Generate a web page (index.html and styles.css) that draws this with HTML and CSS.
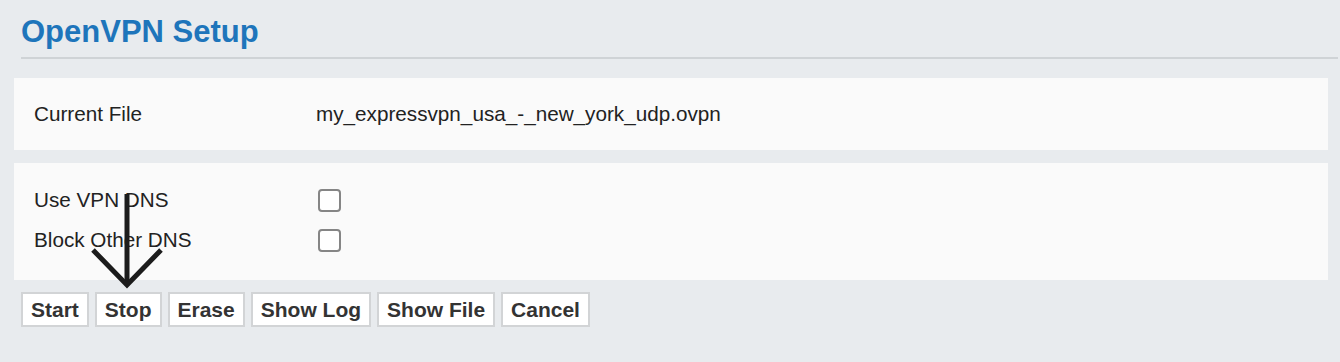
FILE: index.html
```html
<!DOCTYPE html>
<html lang="en">
<head>
    <meta charset="UTF-8">
    <meta name="viewport" content="width=device-width, initial-scale=1.0">
    <title>OpenVPN Setup</title>
    <link rel="stylesheet" href="styles.css">
</head>
<body>

<div class="page-head">
    <h1>OpenVPN Setup</h1>
</div>

<div class="content">
    <div class="panel">
        <div class="row">
            <span class="label">Current File</span>
            <span class="value">my_expressvpn_usa_-_new_york_udp.ovpn</span>
        </div>
    </div>

    <div class="panel panel-options">
        <div class="row">
            <label class="label" for="vpn-dns">Use VPN DNS</label>
            <input type="checkbox" id="vpn-dns">
        </div>
        <div class="row">
            <label class="label" for="block-dns">Block Other DNS</label>
            <input type="checkbox" id="block-dns">
        </div>
    </div>

    <div class="buttons">
        <button>Start</button>
        <button>Stop</button>
        <button>Erase</button>
        <button>Show Log</button>
        <button>Show File</button>
        <button>Cancel</button>
    </div>
</div>

<!-- annotation arrow pointing at Stop -->
<svg class="arrow" width="80" height="104" viewBox="0 0 80 104">
    <line x1="39" y1="5" x2="39" y2="96" stroke="#1c1c1c" stroke-width="5"/>
    <polyline points="5,61 39,96 73,61" fill="none" stroke="#1c1c1c" stroke-width="5"/>
</svg>

</body>
</html>
```

FILE: styles.css
```css
html, body {
    margin: 0;
    padding: 0;
    font-family: "Liberation Sans", Arial, sans-serif;
}

body {
    background-color: #e8ebee;
    color: #222222;
    min-height: 362px;
    position: relative;
}

.page-head {
    margin: 0 2px 0 21px;
    padding-top: 14px;
    padding-bottom: 7px;
    border-bottom: 2px solid #cfd3d6;
}

h1 {
    margin: 0;
    font-size: 31px;
    line-height: 36px;
    font-weight: bold;
    color: #1e75bb;
}

.content {
    margin: 19px 12px 0 14px;
}

.panel {
    background-color: #fafafa;
    padding: 18px 20px;
    margin-bottom: 13px;
}

.panel-options {
    padding: 17px 20px 20px;
    margin-bottom: 12px;
}

.row {
    display: flex;
    align-items: center;
    height: 36px;
    font-size: 20.7px;
}

.panel-options .row {
    height: 40px;
}

.label {
    width: 282px;
    flex-shrink: 0;
}

input[type="checkbox"] {
    appearance: none;
    -webkit-appearance: none;
    width: 23px;
    height: 23px;
    margin: 0 0 0 2px;
    border: 2px solid #858585;
    border-radius: 4px;
    background-color: #ffffff;
    box-sizing: border-box;
}

.buttons {
    display: flex;
    gap: 6px;
    margin-left: 7px;
}

button {
    height: 35px;
    padding: 0 8px;
    background-color: #ffffff;
    border: 2px solid #d2d4d6;
    font-family: "Liberation Sans", Arial, sans-serif;
    font-size: 21px;
    font-weight: bold;
    color: #333333;
    cursor: pointer;
}

.arrow {
    position: absolute; /* overlay annotation */
    left: 88px;
    top: 189px;
}
```
